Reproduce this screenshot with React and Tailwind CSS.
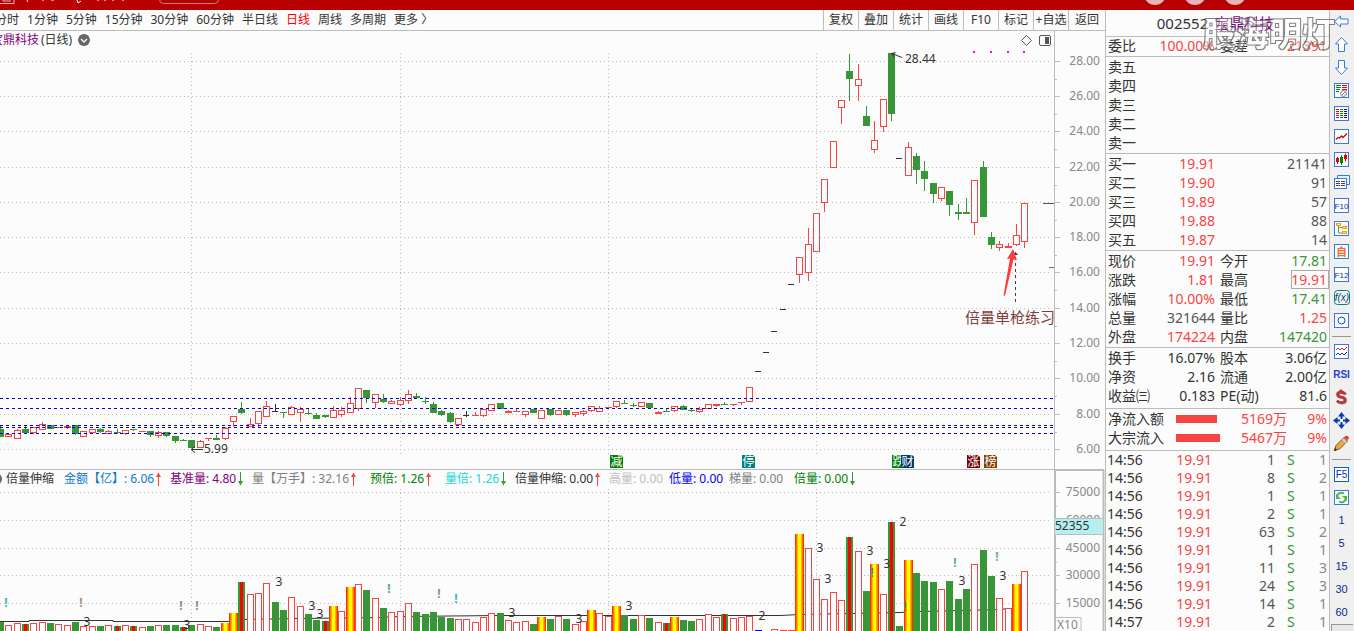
import React from "react";

const RED = "#f94444";
const GREEN = "#389638";
const INK = "#333333";
const PAPER = "#fcfcfc";

// Candles: kind, body top, body bottom, wick top, wick bottom
const CANDLES = [
  ["G",429,437,426,437],["R",434,437],["R",430,439,429,439],["G",429,433,426,433],["R",427,433,427,434],["R",424,430,422,430],["G",425,429],["R",427,428],["R",426,428,425,429],["G",425,434,425,435],
  ["R",431,437],["R",429,433,429,434],["G",429,432,428,433],["R",431,434,430,434],["G",432,433,429,434],["R",430,434,430,435],["G",429,430,429,431],["R",431,432],["G",431,435,431,437],["R",432,436,431,438],
  ["G",432,436,432,437],["G",436,441,436,443],["G",440,441,439,441],["G",440,448],["R",441,448,440,448],["R",438,439,438,441],["G",438,440,435,440],["R",428,439,427,440],["R",416,422,416,427],["G",409,413,402,414],
  ["R",424,427,418,427],["R",411,424,411,427],["R",406,417,401,417],["K",411,412,404,412],["G",412,413,412,418],["R",407,415,406,415],["R",409,413,407,422],["G",413,414,409,415],["G",415,419,413,419],["G",415,417,415,418],
  ["R",410,418,406,418],["R",410,415,407,417],["R",403,413,397,413],["R",388,409,388,411],["G",390,398,390,403],["R",394,403,394,408],["G",399,402,394,403],["R",401,404,400,404],["R",400,405,397,406],["R",394,401,390,404],
  ["G",396,398,393,398],["G",401,402,397,404],["G",404,413,402,413],["G",411,415,410,416],["G",413,422,412,423],["R",418,425],["K",415,416,411,417],["R",415,416,412,416],["R",409,416,409,417],["R",404,411],
  ["G",403,409],["R",411,413,410,413],["R",411,412,409,412],["R",411,415,411,417],["G",409,413],["R",410,419],["G",409,415,409,416],["R",410,415],["G",410,415,410,416],["R",412,415,412,417],
  ["R",411,414,410,416],["R",406,411,406,412],["R",408,412,406,412],["R",407,408],["R",401,407,401,408],["G",403,404,400,404],["G",405,406,403,407],["R",402,407],["G",403,408],["R",412,414,411,414],
  ["G",411,412,409,412],["R",406,411,406,412],["G",406,410,405,410],["G",410,411,408,412],["R",409,412,407,413],["R",404,409],["R",404,406,404,407],["G",404,405,402,405],["R",404,405,404,406],["R",402,403,402,405],
  ["R",387,402],["K",371,372],["K",352,353],["K",331,332],["K",309,310],["K",284,285],["R",257,275,257,283],["R",244,273,228,281],["R",213,252],["R",179,203,179,212],
  ["R",141,168],["R",100,108,100,124],["G",71,79,54,101],["R",79,86,64,101],["G",116,126,106,126],["R",140,150,121,153],["R",99,127,99,132],["G",53,114,53,121],["K",158,159],["R",147,176,142,176],
  ["G",156,170,153,184],["G",171,179,161,191],["G",183,194,183,203],["R",187,199,187,201],["G",191,205,191,216],["G",212,214,204,220],["G",212,214,198,214],["R",180,223,180,235],["G",167,217,161,217],["G",237,245,232,249],
  ["R",244,248,241,251],["R",246,248,243,248],["R",235,245,224,246],["R",203,242,203,248],
];

// Volume bars: G solid, R hollow, Y yellow, M green with a red core
const VOLUME =
  "G622 R625 R623 M624 R623 R622 G623 R624 R625 G622 R626 R626 G626 R625 M626 R625 M626 R627 G626 R625 G625 G625 M627 G625 R624 R626 G627 Y623 Y613 M582 R594 R593 R583 G602 G610 R597 R606 G614 G620 M621 Y606 R611 Y587 R584 G590 R598 G608 R612 R611 R603 G612 G614 G612 G617 G618 R619 R619 R622 R617 R613 G613 R620 R622 R621 G624 Y617 G619 R616 G619 R624 R621 Y610 R613 R616 Y606 G615 G619 R615 G618 R622 M623 Y617 G620 G621 R619 R614 R617 M614 R618 R617 R616 B630 B631 R629 R630 R630 Y534 R548 R579 R599 R592 R600 M537 R551 G591 Y564 R594 M522 G626 Y560 G573 G581 G582 R589 G581 G599 G589 R564 G550 G576 R598 R608 Y584 R571"
    .split(" ")
    .map((s) => [s[0], Number(s.slice(1))]);

const MARKS = [
  [279,582,"3"],[87,622,"3"],[187,625,"3"],[312,606,"3"],[320,614,"3"],[512,613,"3"],[579,619,"3"],[629,606,"3"],[762,616,"2"],[820,548,"3"],[828,579,"3"],[870,551,"3"],[887,564,"3"],[903,522,"2"],[962,581,"3"],[1003,576,"3"],
];
const ALERTS = [
  [6,603,"#30b8c8"],[81,603,"#b09070"],[181,606,"#909080"],[197,606,"#909080"],[389,589,"#60a0a0"],[439,594,"#909080"],[456,599,"#30b8c8"],[872,573,"#309080"],[905,607,"#707050"],[955,563,"#50a8a8"],[997,557,"#70a8a0"],
];
const PRICES = [[28,61],[26,96],[24,131],[22,167],[20,202],[18,237],[16,272],[14,308],[12,343],[10,378],[8,414],[6,449]];
const VOL_LEVELS = [[75000,492],[60000,520],[45000,548],[30000,575],[15000,603]];
const MONTHS = [191, 400, 608, 816];
const BADGES = [["减",610,"#008000"],["停",742,"#008080"],["跌",892,"#008000"],["财",901,"#003a6b"],["涨",967,"#800000"],["榜",984,"#804000"]];
const col = (i) => Math.floor(0.45 + 8.327 * i);

function Candle({ i, d }) {
  const [k, t, b, wt = t, wb = b] = d;
  const x = col(i);
  const c = k === "R" ? RED : k === "G" ? GREEN : INK;
  const hollow = k === "R" && b - t > 2;
  return (
    <g>
      {wb > wt && <rect x={x} y={wt} width="1" height={wb - wt} fill={c} />}
      {hollow ? (
        <rect x={x - 2.5} y={t + 0.5} width="6" height={b - t - 1} fill={PAPER} stroke={c} />
      ) : (
        <rect x={x - 3} y={t} width={k === "K" ? 6 : 7} height={b - t} fill={c} />
      )}
    </g>
  );
}

function Bar({ i, d }) {
  const [k, t] = d;
  const x = col(i);
  const h = 640 - t;
  if (k === "R") return <rect x={x - 2.5} y={t + 0.5} width="6" height={h} fill={PAPER} stroke={RED} />;
  if (k === "Y")
    return (
      <g>
        <rect x={x - 4} y={t} width="9" height={h} fill="#ff3300" />
        <rect x={x - 3} y={t} width="7" height={h} fill="#ff7700" />
        <rect x={x - 2} y={t} width="5" height={h} fill="#ffb400" />
        <rect x={x - 1} y={t} width="3" height={h} fill="#ffff00" />
      </g>
    );
  return (
    <g>
      <rect x={x - 3} y={t} width="7" height={h} fill={k === "B" ? "#0000ff" : GREEN} />
      {k === "M" && <rect x={x - 1} y={t} width="3" height={h} fill="#ff0000" />}
    </g>
  );
}

function PriceChart() {
  return (
    <svg className="block h-[438px] w-full text-xs" role="img" aria-label="日线">
      <g transform="translate(0,-31)">
        <g stroke="#bcbcbc" strokeDasharray="1 3" shapeRendering="crispEdges">
          {PRICES.map(([p, y]) => <line key={p} x1="0" x2="1051" y1={y + 0.5} y2={y + 0.5} />)}
          {MONTHS.map((x) => <line key={x} x1={x + 0.5} x2={x + 0.5} y1="53" y2="454" />)}
        </g>
        {CANDLES.map((d, i) => <Candle key={i} i={i} d={d} />)}
        <g stroke="#0000e0" strokeDasharray="3 3" shapeRendering="crispEdges">
          {[398, 408, 425, 427, 433].map((y) => <line key={y} x1="0" x2="1053" y1={y + 0.5} y2={y + 0.5} />)}
        </g>
        <path d="M1043 203.5h11" stroke="#555" />
        <path d="M1049 267.5h5" stroke={GREEN} />
        <g fill="#ff00ff">
          {[973, 990, 1007, 1023].map((x) => <rect key={x} x={x} y="51" width="2" height="2" />)}
        </g>
        <g stroke={INK} fill="none">
          <path d="M902 57.5l-10-4M895.5 52.5l-4 1 3 4M203 449.5h-11M195 446.5l-4 3 4 3" />
          <path d="M1021.5 40.5l5-5 5 5-5 5z" stroke="#555" />
          <rect x="1039.5" y="35.5" width="11" height="10" rx="1.5" stroke="#555" />
        </g>
        <rect x="1045" y="37" width="4" height="7" fill="#555" />
        <text x="905" y="63" fill={INK}>28.44</text>
        <text x="204" y="453" fill={INK}>5.99</text>
        <path d="M1015.5 257v46" stroke="#6b2c2c" strokeDasharray="3 3" />
        <path d="M1013 255l2.500-3 2.500 3z" fill="#5a2020" />
        <path d="M1013 249l-6 10 3-.5-6.500 37 1.500 0 8.500-36 3.500.5z" fill="#ff3b3b" />
        <text x="965" y="323" fill="#7f3f3f" className="text-[15px]">倍量单枪练习</text>
        {BADGES.map(([t, x, c]) => (
          <g key={t}>
            <path d={`M${x} 455h11l2 2v11h-13z`} fill={c} />
            <text x={x + 0.5} y="466" fill="#fff">{t}</text>
          </g>
        ))}
      </g>
    </svg>
  );
}

function PriceAxis() {
  return (
    <svg className="block h-[438px] w-full text-xs" aria-label="价格">
      <g transform="translate(0,-31)">
        <g fill="#bcbcbc">
          <rect x="0" y="31" width="1" height="438" />
          {PRICES.map(([p, y]) => (
            <g key={p}>
              <rect x="1" y={y} width="5" height="1" />
              {p > 6 && <rect x="1" y={y + 18} width="2" height="1" />}
            </g>
          ))}
        </g>
        <g fill="#888" textAnchor="end">
          {PRICES.map(([p, y]) => <text key={p} x="46" y={y + 4}>{p.toFixed(2)}</text>)}
        </g>
      </g>
    </svg>
  );
}

function VolumeChart() {
  return (
    <svg className="block h-[143px] w-full text-xs" role="img" aria-label="倍量伸缩">
      <g transform="translate(0,-488)">
        <g stroke="#bcbcbc" strokeDasharray="1 3" shapeRendering="crispEdges">
          {VOL_LEVELS.map(([p, y]) => <line key={p} x1="0" x2="1051" y1={y + 0.5} y2={y + 0.5} />)}
          {MONTHS.map((x) => <line key={x} x1={x + 0.5} x2={x + 0.5} y1="489" y2="631" />)}
        </g>
        <polyline fill="none" stroke={INK} points="0,621.5 29,621.5 29,620.5 113,620.5 113,621.5 228,621.5 240,619.5 300,618.5 380,617.5 400,616.5 500,615.5 780,615.5 800,614.5 850,613.5 900,612.5 920,611.5 960,610.5 1000,609.5 1008,608.5" />
        {VOLUME.map((d, i) => <Bar key={i} i={i} d={d} />)}
        <g textAnchor="middle">
          {MARKS.map(([x, y, t]) => <text key={x} x={x} y={y + 4} fill={INK}>{t}</text>)}
          {ALERTS.map(([x, y, c]) => <text key={x} x={x} y={y + 4} fill={c} className="font-bold">!</text>)}
        </g>
      </g>
    </svg>
  );
}

function VolumeAxis() {
  return (
    <svg className="block h-[162px] w-full text-xs" aria-label="成交量">
      <g transform="translate(0,-469)">
        <path d="M0 470h50M1 470v161M49.500 470v161" stroke="#bcbcbc" strokeWidth="2" fill="none" />
        <g fill="#bcbcbc">
          {VOL_LEVELS.map(([p, y]) => (
            <g key={p}>
              <rect x="1" y={y} width="5" height="1" />
              <rect x="1" y={y + 14} width="2" height="1" />
            </g>
          ))}
        </g>
        <g fill="#888" textAnchor="end">
          {VOL_LEVELS.map(([p, y]) => <text key={p} x="46" y={y + 4}>{p}</text>)}
        </g>
        <rect x="1" y="518" width="48" height="16" fill="#b5f0f0" />
        <path d="M1 518.5h48M1 534.5h48" stroke="#bcbcbc" />
        <text x="1" y="530" fill={INK}>52355</text>
        <path d="M1 617.500h26v14" stroke="#bcbcbc" fill={PAPER} />
        <text x="3" y="629" fill="#888">X10</text>
      </g>
    </svg>
  );
}

function Arrow({ up }) {
  return (
    <svg className="ml-px h-3.5 w-2 shrink-0" viewBox="0 0 8 14" aria-hidden="true">
      {up ? (
        <><path d="M3.500 1v13" stroke={RED} /><path d="M1 5l2.500-4.500 2.500 4.500z" fill={RED} /></>
      ) : (
        <><path d="M3.500 0v13" stroke={GREEN} /><path d="M1 9l2.500 4.500 2.500-4.500z" fill={GREEN} /></>
      )}
    </svg>
  );
}

const INDICATORS = [
  ["倍量伸缩", "w-[58px] text-[#333]", null],
  ["金额【亿】: 6.06", "w-[106px] text-[#0a78d6]", "u"],
  ["基准量: 4.80", "w-[82px] text-[#800080]", "d"],
  ["量【万手】: 32.16", "w-[118px] text-[#808080]", "u"],
  ["预倍: 1.26", "w-[75px] text-[#008000]", "u"],
  ["量倍: 1.26", "w-[70px] text-[#20d8d8]", "d"],
  ["倍量伸缩: 0.00", "w-[94px] text-[#333]", "u"],
  ["高量: 0.00", "w-[60px] text-[#c0c0c0]", null],
  ["低量: 0.00", "w-[60px] text-[#0000ff]", null],
  ["梯量: 0.00", "w-[65px] text-[#808080]", null],
  ["倍量: 0.00", "w-[70px] text-[#008000]", "d"],
];

const PERIODS = ["分时", "1分钟", "5分钟", "15分钟", "30分钟", "60分钟", "半日线", "日线", "周线", "多周期", "更多 〉"];
const TOOLS = ["复权", "叠加", "统计", "画线", "F10", "标记", "+自选", "返回"];

const R = "text-[#f94444]";
const G = "text-[#389638]";
const K = "text-[#333]";
const S = "text-[#555]";

function Quotes({ rows, className }) {
  return (
    <table className={"w-full table-fixed border-collapse " + className}>
      <colgroup>
        <col className="w-[50px]" /><col className="w-[59px]" /><col className="w-[45px]" /><col />
      </colgroup>
      <tbody>
        {rows.map(([a, b, bc, c, d, dc, box]) => (
          <tr key={a} className="h-[19px]">
            <th scope="row" className="whitespace-nowrap p-0 pl-0.5 text-left font-normal">{a}</th>
            <td className={"whitespace-nowrap p-0 text-right " + bc}>{b}</td>
            <th scope="row" className="whitespace-nowrap p-0 pl-[5px] text-left font-normal">{c}</th>
            <td className={"whitespace-nowrap p-0 text-right " + dc}>
              <span className={box ? "pr-0.5 outline outline-1 -outline-offset-1 outline-[#aaa]" : "pr-0.5"}>{d}</span>
            </td>
          </tr>
        ))}
      </tbody>
    </table>
  );
}

// Hollow lettering: a grey rim round each glyph with a thin white wash inside
function Watermark() {
  return (
    <div className="pointer-events-none absolute left-[97px] top-[2px] whitespace-nowrap text-[33px] leading-[44px] font-bold text-white [filter:url(#rim)]">
      <svg className="absolute size-0" aria-hidden="true">
        <filter id="rim" x="-5%" y="-10%" width="110%" height="120%" colorInterpolationFilters="sRGB">
          <feMorphology in="SourceAlpha" operator="dilate" radius="1" result="fat" />
          <feFlood floodColor="#6c6c6c" floodOpacity="0.85" />
          <feComposite in2="fat" operator="in" />
          <feComposite in2="SourceAlpha" operator="out" result="rim" />
          <feComponentTransfer in="SourceGraphic" result="wash">
            <feFuncA type="linear" slope="0.4" />
          </feComponentTransfer>
          <feMerge>
            <feMergeNode in="wash" />
            <feMergeNode in="rim" />
          </feMerge>
        </filter>
      </svg>
      股海明灯
    </div>
  );
}

const ASKS = ["五", "四", "三", "二", "一"].map((n) => ["卖" + n, "", "", "", "", ""]);
const BIDS = [["一","19.91","21141"],["二","19.90","91"],["三","19.89","57"],["四","19.88","88"],["五","19.87","14"]].map(([n, p, q]) => ["买" + n, p, R, "", q, S]);
const STATS = [
  ["现价","19.91",R,"今开","17.81",G],["涨跌","1.81",R,"最高","19.91",R,true],["涨幅","10.00%",R,"最低","17.41",G],["总量","321644",S,"量比","1.25",R],["外盘","174224",R,"内盘","147420",G],
];
const BASICS = [["换手","16.07%",K,"股本","3.06亿",K],["净资","2.16",K,"流通","2.00亿",K],["收益㈢","0.183",K,"PE(动)","81.6",K]];
const TRADES = [["14:56",1,1],["14:56",8,2],["14:56",1,1],["14:56",2,1],["14:56",63,2],["14:56",1,1],["14:56",11,3],["14:56",24,3],["14:56",14,1],["14:57",2,1]];

const Frame = ({ children, c = "#3a78e0" }) => (
  <>
    <rect x="1.5" y="1.500" width="14" height="14" fill="#fff" stroke={c} />
    {children}
  </>
);
const Rows = ({ x, c }) => <path d={`M${x} 4.500h3M${x} 6.500h3M${x} 8.500h3M${x} 10.500h3M${x} 12.500h3`} stroke={c} strokeWidth="1.2" />;

const ICONS = [
  ["后退", <path d="M1.500 8.500l6-5.500v3h7.500v5h-7.500v3z" fill="#fff" stroke="#3a78e0" />],
  ["上移", <path d="M8.500 1.500l6 6.500h-3v7.500h-6v-7.500h-3z" fill="#fff" stroke="#3a78e0" />],
  ["下移", <path d="M8.500 15.500l6-6.500h-3v-7.500h-6v7.500h-3z" fill="#fff" stroke="#3a78e0" />],
  ["报价", <Frame><path d="M3 3.500h5M3 5.500h5M3 7.500h4M3 9.500h3" stroke="#009000" strokeWidth="1.2" /><path d="M9 3.500h5M9 5.500h5M9 7.500h5" stroke="#f00000" strokeWidth="1.2" /><circle cx="10.500" cy="11.500" r="3" fill="#eee" stroke="#888" /><path d="M9 13l5-5" stroke="#888" /></Frame>],
  ["列表", <Frame><Rows x="3" c="#f00000" /><Rows x="7" c="#009000" /><Rows x="11" c="#0000f0" /></Frame>],
  ["走势", <Frame><path d="M3 11.500l2-2 1.500.5 2-2 1.500 1.500 4-4" stroke="#d00000" strokeWidth="1.300" fill="none" /></Frame>],
  ["K线", <Frame><path d="M4.500 6v7M12.500 2.500v8" stroke="#e00000" /><path d="M8.500 4v10" stroke="#008000" /><rect x="3" y="7" width="3" height="4" fill="#e00000" /><rect x="7" y="6" width="3" height="6" fill="#008000" /><rect x="11" y="4" width="3" height="4" fill="#e00000" /></Frame>],
  ["窗口", <><path d="M4.500 4v-2.500h12v9h-3" fill="#e4f0ff" stroke="#3a78e0" /><rect x="1.500" y="4.500" width="12" height="10" fill="#fff" stroke="#3a78e0" /><path d="M3 7.500h4M8 7.500h4M3 9.500h4M8 9.500h4M3 11.500h4M8 11.500h4" stroke="#444" /></>],
  ["F10", <Frame><text x="8.500" y="12" textAnchor="middle" fill="#0030b0" className="text-[8px]">F10</text></Frame>],
  ["结构", <Frame><path d="M5.500 6v7h4M5.500 7.500h4" stroke="#8a8a30" fill="none" /><rect x="3.500" y="3.500" width="4" height="2" fill="#ffe060" stroke="#e0a820" /><rect x="9.500" y="6.500" width="4" height="2" fill="#ffe060" stroke="#e0a820" /><rect x="9.500" y="11.500" width="4" height="2" fill="#ffe060" stroke="#e0a820" /></Frame>],
  ["自选", <Frame c="#0a90e8"><text x="8.500" y="12.500" textAnchor="middle" fill="#ff6a2a" className="text-[11px] font-bold">自</text></Frame>],
  ["F12", <Frame><text x="8.500" y="12" textAnchor="middle" fill="#0030b0" className="text-[8px]">F12</text></Frame>],
  ["公式", <><rect x="1.500" y="1.500" width="15" height="14" rx="3" fill="#f4f8f4" stroke="#008080" /><text x="9" y="12" textAnchor="middle" fill="#003a80" className="text-[10px] italic">f(x)</text></>],
  ["圆", <Frame><circle cx="8.500" cy="8.500" r="3.500" fill="none" stroke="#0050c0" /></Frame>],
  null,
  ["曲线", <Frame><path d="M3 7l2-2 2 2 2-2 2 2 3-3" stroke="#e02020" fill="none" /><path d="M3 12l2-2 2 2 2-2 2 2 3-3" stroke="#2020e0" fill="none" /></Frame>],
  ["RSI", <text x="8.500" y="12" textAnchor="middle" fill="#2040d8" className="text-[10px] font-bold">RSI</text>],
  ["资金", <><path d="M13 5.500q-2-2-4.500-2-3.500 0-3.500 2.300t3.800 2.700q3.700.5 3.700 3t-3.800 2.500q-2.700 0-4.700-2" fill="none" stroke="#888" strokeWidth="3" /><path d="M12 5q-1.500-2-4-2-3.500 0-3.500 2.300t3.800 2.700q3.700.5 3.700 3t-3.800 2.500q-2.700 0-4.200-2" fill="none" stroke="#c83030" strokeWidth="2.500" /><path d="M8 0l3 3h-6z" fill="#c83030" /></>],
  ["移动", <><path d="M8.500 3v11M3 8.500h11" stroke="#0a3ab0" strokeWidth="2" /><path d="M8.500 0l3.500 4.500h-7zM8.500 17l3.500-4.500h-7zM0 8.500l4.500-3.500v7zM17 8.500l-4.500-3.500v7z" fill="#0a3ab0" /><rect x="7" y="7" width="3" height="3" fill="#fff" /></>],
  ["画笔", <><path d="M1.500 15.500l1.500-5 8-8 3.500 3.500-8 8z" fill="#e8a840" stroke="#805020" /><path d="M11 2.500l1.500-1.500q2-1 3 1t-1 3z" fill="#d84040" /><path d="M9.500 4l3.500 3.500" stroke="#ccc" strokeWidth="2" /><path d="M1 16l1-3 2 2z" fill="#222" /></>],
  null,
  ["F5", <Frame c="#0a60c8"><text x="8.500" y="12" textAnchor="middle" fill="#0030c0" className="text-[10px]">F5</text></Frame>],
  ["刷新", <Frame><path d="M4 8a4.500 4.500 0 0 1 7-3.500M13 9a4.500 4.500 0 0 1-7 3.500" stroke="#48b848" strokeWidth="2" fill="none" /><path d="M3 5v5h5zM14 12v-5h-5z" fill="#48b848" /></Frame>],
  "1", "5", "15", "30", "60",
];

export default function App() {
  return (
    <div className="flex h-screen min-w-0 flex-col overflow-hidden bg-[#fcfcfc] font-['Noto_Sans','Noto_Sans_CJK_SC',sans-serif] text-[#333]">
      <header className="h-2.5 shrink-0 overflow-hidden bg-[#b90000]">
        <svg className="block h-2.5 w-full" aria-hidden="true">
          <path d="M0 3.500h14v-4M3 0v1h8" stroke="#f0b0b0" fill="none" />
          <path d="M27 0l1 2M43 0v1M51 0h3M77 0l1 3 3-2M98 0v1M104 0h2M113 0v1M122 0h2" stroke="#fff" fill="none" />
          <rect x="159.500" y="-15.500" width="59" height="19" rx="4" fill="none" stroke="#c08080" />
          {[1155, 1195, 1235].map((x) => <circle key={x} cx={x} cy="-6" r="11" fill="#ecb4b8" />)}
        </svg>
      </header>
      <div className="flex min-h-0 flex-1">
        <main className="flex min-w-0 flex-1 flex-col">
          <nav className="flex h-[21px] shrink-0 items-stretch justify-between border-b border-[#bcbcbc] text-xs">
            <div className="-ml-[5px] flex items-center gap-2">
              {PERIODS.map((p) => (
                <button key={p} className={p === "日线" ? "whitespace-nowrap text-[#ff0000]" : "whitespace-nowrap"}>{p}</button>
              ))}
            </div>
            <div className="flex">
              {TOOLS.map((t) => (
                <button key={t} className="w-[35px] whitespace-nowrap border-l border-[#bcbcbc] text-center last:w-[37px]">{t}</button>
              ))}
            </div>
          </nav>
          <div className="flex min-h-0 flex-1">
            <section className="min-w-0 flex-1">
              <div className="relative border-b border-[#bcbcbc]">
                <PriceChart />
                <h1 className="absolute left-0 top-0 flex h-[18px] items-center text-xs">
                  <span className="-ml-[9px] text-[#800080]">宝鼎科技</span>
                  <span className="ml-0.5">(日线)</span>
                  <svg className="ml-1.5 size-3" viewBox="0 0 12 12" aria-hidden="true">
                    <circle cx="6" cy="6" r="6" fill="#666" />
                    <path d="M3 5l3 3 3-3" stroke="#fff" fill="none" strokeWidth="1.300" />
                  </svg>
                </h1>
              </div>
              <div className="relative flex h-[18px] items-center overflow-hidden pl-1.5 text-xs">
                <span className="absolute -left-2.5 top-[3px] size-3 rounded-full bg-[#666]" />
                {INDICATORS.map(([t, c, a]) => (
                  <span key={t} className={"flex shrink-0 items-center whitespace-nowrap " + c}>
                    {t}
                    {a && <Arrow up={a === "u"} />}
                  </span>
                ))}
              </div>
              <VolumeChart />
            </section>
            <aside className="w-[51px] shrink-0">
              <PriceAxis />
              <VolumeAxis />
            </aside>
          </div>
        </main>

        <section className="relative w-[225px] shrink-0 border-x border-[#bcbcbc] text-sm leading-[18px]">
          <h2 className="flex h-[27px] items-center justify-center gap-1.5 border-b border-[#bcbcbc] pr-1 text-[15px]">
            <span>002552</span>
            <span className="text-[#800080]">宝鼎科技</span>
          </h2>
          <Watermark />
          <Quotes className="border-b border-[#bcbcbc]" rows={[["委比", "100.00%", R, "委差", "21391", R]]} />
          <div className="border-b border-[#bcbcbc] pt-px"><Quotes className="" rows={ASKS} /></div>
          <div className="border-b border-[#bcbcbc] pt-px"><Quotes className="" rows={BIDS} /></div>
          <div className="border-b border-[#bcbcbc] pt-px"><Quotes className="" rows={STATS} /></div>
          <div className="border-b border-[#bcbcbc] pb-0.5 pt-px"><Quotes className="" rows={BASICS} /></div>
          <div className="border-b border-[#bcbcbc] pb-0.5 pt-px">
            {[["净流入额", "5169万", "w-[41px]"], ["大宗流入", "5467万", "w-11"]].map(([n, v, w]) => (
              <div key={n} className="flex h-[19px] items-center pl-0.5 pr-0.5">
                <span className="w-[68px] whitespace-nowrap">{n}</span>
                <span className={"h-2 bg-[#f94444] " + w} />
                <span className="flex-1 text-right text-[#f94444]">{v}</span>
                <span className="w-10 text-right text-[#f94444]">9%</span>
              </div>
            ))}
          </div>
          <table className="w-full table-fixed border-collapse">
            <colgroup><col className="w-[50px]" /><col className="w-[56px]" /><col className="w-[63px]" /><col className="w-6" /><col /></colgroup>
            <tbody>
              {TRADES.map(([t, v, n], i) => (
                <tr key={i} className="h-[18px] leading-[18px]">
                  <td className="p-0 pl-px">{t}</td>
                  <td className="p-0 text-right text-[#f94444]">19.91</td>
                  <td className="p-0 text-right text-[#555]">{v}</td>
                  <td className="p-0 pl-3 text-[#389638]">S</td>
                  <td className="p-0 pr-0.5 text-right text-[#888]">{n}</td>
                </tr>
              ))}
            </tbody>
          </table>
        </section>

        <aside className="flex w-6 shrink-0 flex-col items-stretch bg-[#f0f0f0] pr-px font-['Liberation_Sans','Noto_Sans_CJK_SC',sans-serif]">
          {ICONS.map((ic, i) =>
            ic === null ? (
              <div key={i} className="flex h-2 shrink-0 items-center px-0.5"><div className="h-px w-full bg-[#999]" /></div>
            ) : typeof ic === "string" ? (
              <button key={i} className="h-[23px] shrink-0 text-[11px] text-[#0a2a90]">{ic}</button>
            ) : (
              <button key={i} aria-label={ic[0]} className="flex h-[23px] shrink-0 items-center justify-center">
                <svg className="size-[17px]" viewBox="0 0 17 17">{ic[1]}</svg>
              </button>
            )
          )}
          <div className="ml-px flex-1 border-l border-t border-[#999] bg-[#e8e8e8]" />
        </aside>
      </div>
    </div>
  );
}
